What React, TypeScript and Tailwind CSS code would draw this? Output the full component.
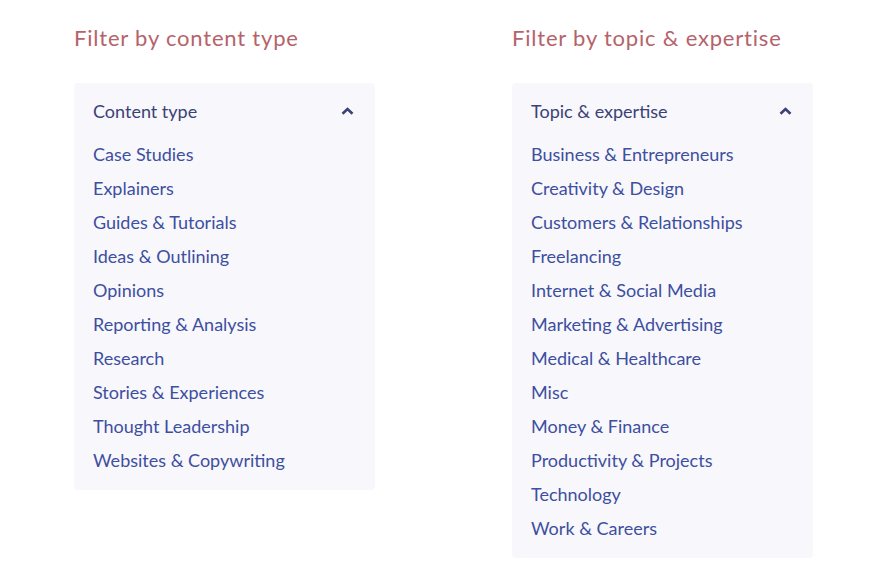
const contentTypes = [
  "Case Studies",
  "Explainers",
  "Guides & Tutorials",
  "Ideas & Outlining",
  "Opinions",
  "Reporting & Analysis",
  "Research",
  "Stories & Experiences",
  "Thought Leadership",
  "Websites & Copywriting",
];

const topics = [
  "Business & Entrepreneurs",
  "Creativity & Design",
  "Customers & Relationships",
  "Freelancing",
  "Internet & Social Media",
  "Marketing & Advertising",
  "Medical & Healthcare",
  "Misc",
  "Money & Finance",
  "Productivity & Projects",
  "Technology",
  "Work & Careers",
];

function FilterColumn({ title, label, items }: { title: string; label: string; items: string[] }) {
  return (
    <div className="w-[301px]">
      <h2 className="text-[22px] leading-[30px] text-[#b5636b] tracking-[0.8px]">{title}</h2>
      <div className="mt-[30px] rounded bg-[#f8f7fc] pt-[16px] pb-[13px] pl-[19px] pr-[21px]">
        <button className="flex w-full items-center justify-between text-left">
          <span className="text-[18px] leading-[24px] text-[#3b4276]">{label}</span>
          <svg width="13" height="8" viewBox="0 0 13 8" fill="none">
            <path d="M1.5 6.8L6.5 2l5 4.8" stroke="#3b4276" strokeWidth="2.6" />
          </svg>
        </button>
        <ul className="mt-[14px]">
          {items.map((it) => (
            <li key={it} className="text-[18px] leading-[34px] text-[#3d4f9f]">
              {it}
            </li>
          ))}
        </ul>
      </div>
    </div>
  );
}

export default function App() {
  return (
    <div className="min-h-[571px] bg-white pt-[23px] pl-[74px] flex gap-[137px]" style={{ fontFamily: "Lato, sans-serif" }}>
      <FilterColumn title="Filter by content type" label="Content type" items={contentTypes} />
      <FilterColumn title="Filter by topic & expertise" label="Topic & expertise" items={topics} />
    </div>
  );
}
